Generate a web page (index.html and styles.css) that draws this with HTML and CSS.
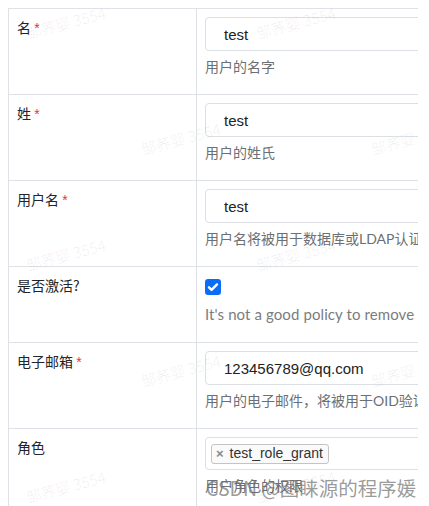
FILE: index.html
```html
<!DOCTYPE html>
<html lang="zh">
<head>
<meta charset="utf-8">
<title>用户编辑</title>
<link rel="stylesheet" href="styles.css">
</head>
<body>
<div class="frame">
  <table class="form-table">
    <colgroup><col class="c-label"><col class="c-field"></colgroup>
    <tr>
      <th>名 <span class="req">*</span></th>
      <td><input class="input" type="text" value="test"><div class="help">用户的名字</div></td>
    </tr>
    <tr>
      <th>姓 <span class="req">*</span></th>
      <td><input class="input" type="text" value="test"><div class="help">用户的姓氏</div></td>
    </tr>
    <tr>
      <th>用户名 <span class="req">*</span></th>
      <td><input class="input" type="text" value="test"><div class="help">用户名将被用于数据库或LDAP认证的唯一标识</div></td>
    </tr>
    <tr class="row-check">
      <th>是否激活?</th>
      <td>
        <div class="check-wrap"><span class="check"><svg viewBox="0 0 16 16" width="16" height="16"><path d="M4 8.3l2.6 2.6L12 5.4" fill="none" stroke="#fff" stroke-width="2.4" stroke-linecap="round" stroke-linejoin="round"/></svg></span></div>
        <div class="help help-en">It's not a good policy to remove a user, just make it inactive</div>
      </td>
    </tr>
    <tr>
      <th>电子邮箱 <span class="req">*</span></th>
      <td><input class="input" type="text" value="123456789@qq.com"><div class="help">用户的电子邮件，将被用于OID验证和通知</div></td>
    </tr>
    <tr>
      <th>角色</th>
      <td>
        <div class="select"><span class="tag"><span class="tag-x">×</span>test_role_grant</span></div>
        <div class="help">用户角色的权限</div>
      </td>
    </tr>
  </table>

  <div class="watermarks">
    <span class="wm wm-a1">邹荞婴 3554</span>
    <span class="wm wm-a2">邹荞婴 3554</span>
    <span class="wm wm-b1">邹荞婴 3554</span>
    <span class="wm wm-b2">邹荞婴 3554</span>
    <span class="wm wm-c1">邹荞婴 3554</span>
    <span class="wm wm-c2">邹荞婴 3554</span>
    <span class="wm wm-d1">邹荞婴 3554</span>
    <span class="wm wm-d2">邹荞婴 3554</span>
    <span class="wm wm-e1">邹荞婴 3554</span>
    <span class="wm wm-e2">邹荞婴 3554</span>
  </div>
  <div class="csdn">CSDN @图睐源的程序媛</div>
</div>
</body>
</html>
```

FILE: styles.css
```css
html, body {
  margin: 0;
  padding: 0;
  background: #fff;
}
body {
  padding: 8px 0 0 8px;
  height: 506px;
  box-sizing: border-box;
  overflow: hidden;
}
.frame {
  position: relative;
  width: 410px;
  height: 498px;
  overflow: hidden;
  font-family: "Noto Sans CJK SC", sans-serif;
  font-size: 14px;
  line-height: 21px;
  color: #212529;
}
.form-table {
  border-collapse: collapse;
  width: 640px;
  table-layout: fixed;
}
.c-label { width: 188px; }
.c-field { width: 452px; }
.form-table th,
.form-table td {
  border: 1px solid #dee2e6;
  padding: 8px;
  vertical-align: top;
  text-align: left;
}
.form-table th {
  font-weight: normal;
  color: #212529;
}
.req {
  color: #e0364a;
  font-family: "Liberation Sans", sans-serif;
}
.input {
  display: block;
  box-sizing: border-box;
  width: 100%;
  height: 34px;
  margin: 0;
  padding: 0 12px 0 18px;
  border: 1px solid #dcdfe3;
  border-radius: 4px;
  background: #fff;
  font-family: "Liberation Sans", sans-serif;
  font-size: 15px;
  color: #222;
  outline: none;
}
.help {
  margin: 5px 0 9px;
  color: #6c6f73;
  white-space: nowrap;
  font-family: "Lato", "Noto Sans CJK SC", sans-serif;
}
.help-en {
  color: #7a7d80;
  font-size: 15px;
  letter-spacing: 0.1px;
}
.check-wrap {
  padding: 4px 0 9px;
  height: 16px;
}
.check {
  display: block;
  width: 16px;
  height: 16px;
  border-radius: 3px;
  background: #0a6df7;
}
.check svg { display: block; }
.row-check .help { margin-top: 0; }
.select {
  box-sizing: border-box;
  height: 33px;
  border: 1px solid #dcdfe3;
  border-radius: 4px;
  padding: 4px 5px;
}
.tag {
  display: inline-flex;
  align-items: center;
  box-sizing: border-box;
  height: 20px;
  padding: 0 5px 0 4px;
  border: 1px solid #c4c4c4;
  border-radius: 3px;
  background: #fafafa;
  font-family: "Liberation Sans", sans-serif;
  font-size: 14px;
  color: #333;
}
.tag-x {
  color: #888;
  font-weight: bold;
  font-size: 13px;
  margin-right: 6px;
}
.watermarks {
  position: absolute;
  inset: 0;
  pointer-events: none;
}
.wm {
  position: absolute;
  font-size: 15px;
  line-height: 18px;
  white-space: nowrap;
  color: rgba(0, 0, 0, 0.06);
  transform: rotate(-15deg);
}
.wm-a1 { left: 17px; top: 6px; }
.wm-a2 { left: 247px; top: 6px; }
.wm-b1 { left: 132px; top: 122px; }
.wm-b2 { left: 362px; top: 122px; }
.wm-c1 { left: 17px; top: 238px; }
.wm-c2 { left: 247px; top: 238px; }
.wm-d1 { left: 132px; top: 354px; }
.wm-d2 { left: 362px; top: 354px; }
.wm-e1 { left: 17px; top: 470px; }
.wm-e2 { left: 247px; top: 470px; }
.csdn {
  position: absolute;
  left: 198px;
  top: 466px;
  font-size: 19.5px;
  line-height: 28px;
  white-space: nowrap;
  color: rgba(110, 110, 110, 0.7);
  pointer-events: none;
}
```
